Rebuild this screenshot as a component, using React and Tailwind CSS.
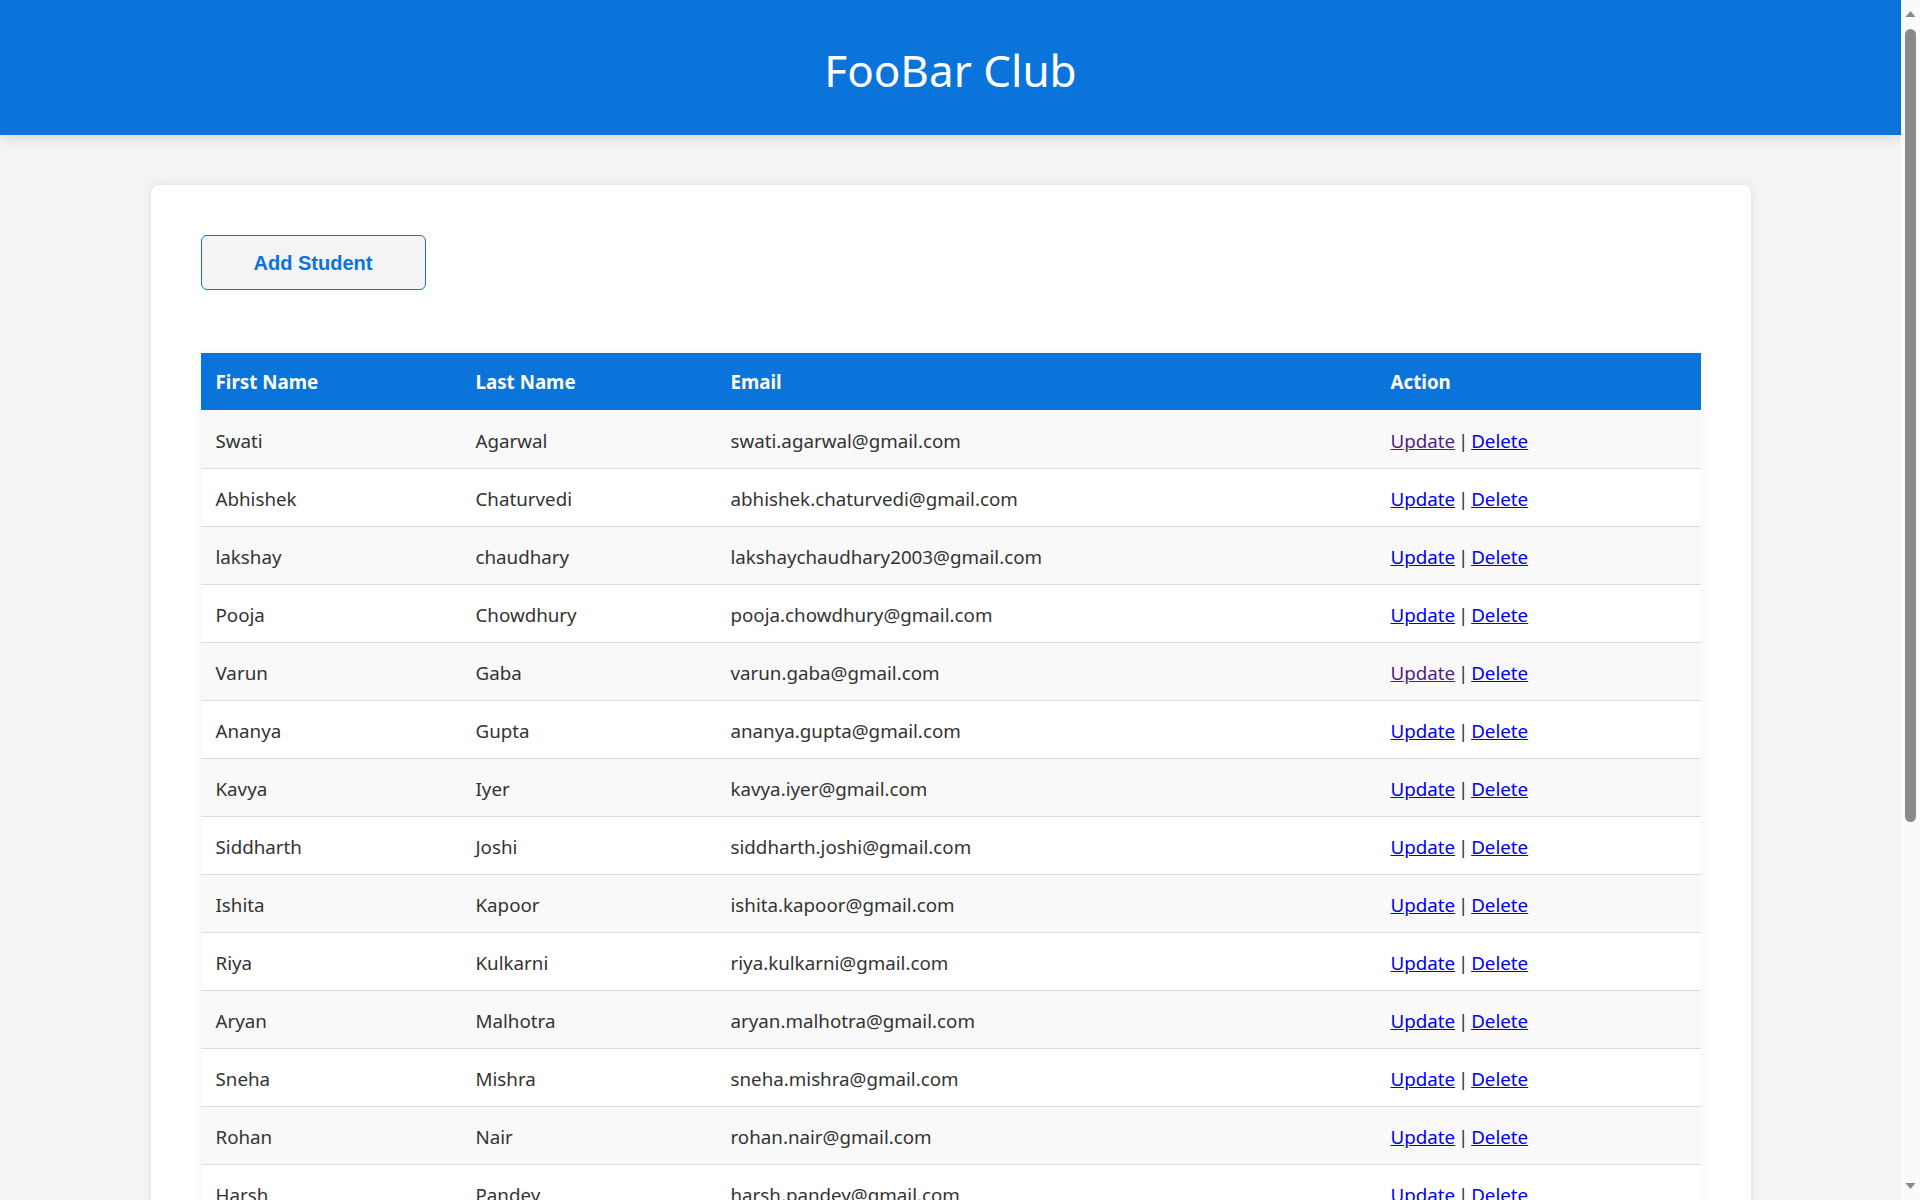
const rows = [
  ["Swati", "Agarwal", "swati.agarwal@gmail.com", true],
  ["Abhishek", "Chaturvedi", "abhishek.chaturvedi@gmail.com", false],
  ["lakshay", "chaudhary", "lakshaychaudhary2003@gmail.com", false],
  ["Pooja", "Chowdhury", "pooja.chowdhury@gmail.com", false],
  ["Varun", "Gaba", "varun.gaba@gmail.com", true],
  ["Ananya", "Gupta", "ananya.gupta@gmail.com", false],
  ["Kavya", "Iyer", "kavya.iyer@gmail.com", false],
  ["Siddharth", "Joshi", "siddharth.joshi@gmail.com", false],
  ["Ishita", "Kapoor", "ishita.kapoor@gmail.com", false],
  ["Riya", "Kulkarni", "riya.kulkarni@gmail.com", false],
  ["Aryan", "Malhotra", "aryan.malhotra@gmail.com", false],
  ["Sneha", "Mishra", "sneha.mishra@gmail.com", false],
  ["Rohan", "Nair", "rohan.nair@gmail.com", false],
  ["Harsh", "Pandey", "harsh.pandey@gmail.com", false],
  ["Neha", "Reddy", "neha.reddy@gmail.com", false],
  ["Karan", "Sharma", "karan.sharma@gmail.com", false],
  ["Priya", "Singh", "priya.singh@gmail.com", false],
];

function Scrollbar() {
  return (
    <div className="fixed right-0 top-0 h-screen w-[19px] bg-[#fafafa] flex flex-col items-center">
      <svg width="11" height="8" viewBox="0 0 11 8" className="mt-[10px] shrink-0">
        <path d="M5.5 1 L10.5 7 L0.5 7 Z" fill="#8a8a8a" />
      </svg>
      <div className="mt-[11px] w-[11px] h-[793px] rounded-full bg-[#8a8a8a]" />
      <div className="flex-1" />
      <svg width="11" height="8" viewBox="0 0 11 8" className="mb-[10px] shrink-0">
        <path d="M0.5 1 L10.5 1 L5.5 7 Z" fill="#8a8a8a" />
      </svg>
    </div>
  );
}

export default function App() {
  return (
    <div className="min-h-screen bg-[#f4f4f4]" style={{ fontFamily: '"Segoe UI", "Noto Sans", "Open Sans", sans-serif' }}>
      <div className="mr-[19px] pb-[50px]">
        <header className="h-[135px] bg-[#0a74da] flex items-center justify-center shadow-[0_4px_10px_rgba(0,0,0,0.1)]">
          <h1 className="text-[44px] font-normal text-white leading-none mt-[4px]">FooBar Club</h1>
        </header>
        <main className="w-[1600px] mx-auto mt-[50px] bg-white rounded-[8px] shadow-[0_0_10px_rgba(0,0,0,0.1)] p-[50px]">
          <button
            className="w-[225px] h-[55px] bg-[#f4f4f4] border border-[#0a74da] rounded-[6px] text-[#0a74da] text-[20px] font-bold"
            style={{ fontFamily: '"Liberation Sans", Arial, sans-serif' }}
          >
            Add Student
          </button>
          <table className="mt-[63px] w-full border-collapse text-[18.75px] text-[#333] shadow-[0_0_10px_rgba(0,0,0,0.05)]">
            <thead>
              <tr className="bg-[#0a74da] text-white h-[57px]">
                <th className="w-[260px] text-left font-bold pl-[15px] pt-[2px]">First Name</th>
                <th className="w-[255px] text-left font-bold pl-[15px] pt-[2px]">Last Name</th>
                <th className="w-[660px] text-left font-bold pl-[15px] pt-[2px]">Email</th>
                <th className="text-left font-bold pl-[15px] pt-[2px]">Action</th>
              </tr>
            </thead>
            <tbody>
              {rows.map(([f, l, e, visited], i) => (
                <tr key={i} className={`h-[58px] border-b border-[#ddd] ${i % 2 === 0 ? "bg-[#f9f9f9]" : "bg-white"}`}>
                  <td className="pl-[15px] pt-[4px]">{f}</td>
                  <td className="pl-[15px] pt-[4px]">{l}</td>
                  <td className="pl-[15px] pt-[4px]">{e}</td>
                  <td className="pl-[15px] pt-[4px]">
                    <a href="#" className={`underline ${visited ? "text-[#551a8b]" : "text-[#0000ee]"}`}>Update</a>
                    <span className="inline-block w-[16px] text-center">|</span>
                    <a href="#" className="underline text-[#0000ee]">Delete</a>
                  </td>
                </tr>
              ))}
            </tbody>
          </table>
        </main>
      </div>
      <Scrollbar />
    </div>
  );
}
